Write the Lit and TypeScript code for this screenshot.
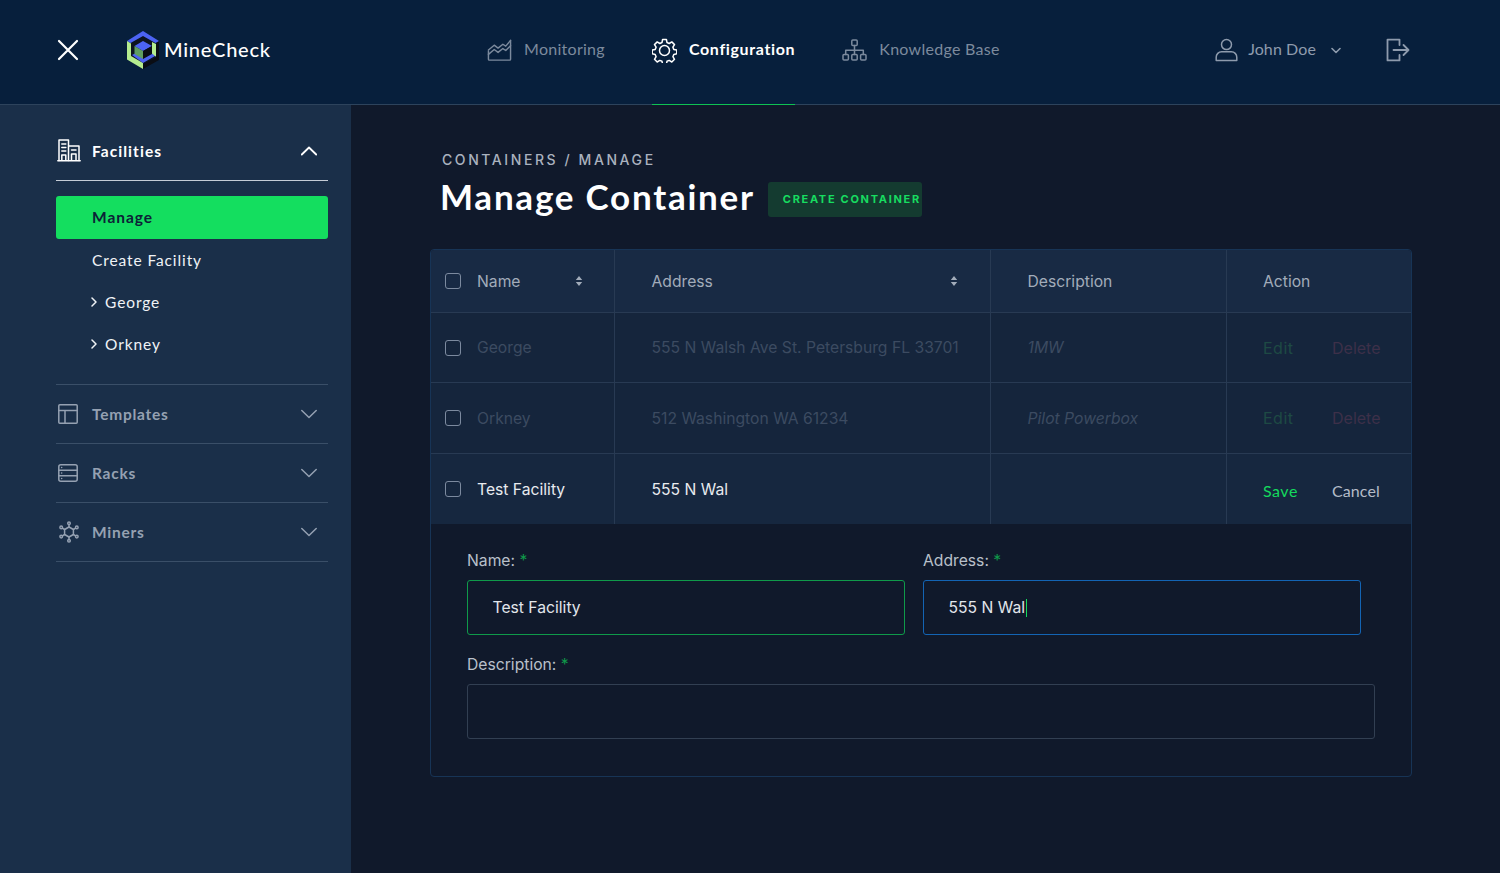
import { LitElement, html, css, svg } from 'lit';
import { customElement } from 'lit/decorators.js';

const icon = (w: number, h: number, vb: string, body: unknown) => html`<svg
  width=${w}
  height=${h}
  viewBox=${vb}
  fill="none"
  stroke="currentColor"
  stroke-width="1.5"
  stroke-linecap="round"
  stroke-linejoin="round"
>${body}</svg>`;

const chevronDown = icon(16, 10, '0 0 16 10', svg`<path d="M.8 1.5 8 8.5l7.2-7" />`);
const chevronUp = icon(16, 10, '0 0 16 10', svg`<path d="M.8 8.5 8 1.5l7.2 7" stroke-width="1.8" />`);
const chevronRight = icon(6, 10, '0 0 6 10', svg`<path d="M1 1l4 4-4 4" />`);
const chevronSmall = icon(10, 7, '0 0 10 7', svg`<path d="M1 1.5l4 4 4-4" stroke-width="1.6" />`);

const closeIcon = icon(22, 22, '0 0 22 22', svg`<path d="M2 2l18 18M20 2 2 20" stroke-width="2.2" />`);

const logo = html`<svg width="32" height="38" viewBox="0 0 32 38">
  <polygon points="4,12 16,5 28,12 28,26 16,33 4,26" fill="#0d1420" />
  <polygon points="29,9 32,10 32,29 16,38 16,33 29,26" fill="#0a0d14" />
  <polygon points="0,10 16,0 32,10 28.5,12 16,5 3.5,12" fill="#4c63f2" />
  <polygon points="0,10 4,12.5 4,25 16,32 16,38 0,28.5" fill="#b5ec8f" />
  <polygon points="25,11 29,13 29,25.5 25,24" fill="#b5ec8f" />
  <polygon points="5,24 9,22 16,26 25,22.5 28,25 16,32" fill="#4c63f2" />
  <polygon points="16,10 25,15 16,20 7.5,15" fill="#4c63f2" />
  <polygon points="7.5,15 16,20 16,28 7.5,23" fill="#5f9d62" />
  <polygon points="25,15 25,23 16,28 16,20" fill="#0a0d14" />
</svg>`;

const monitoringIcon = icon(25, 24, '0 0 26 24', svg`
  <path d="M1.5 13v8.5a1 1 0 0 0 1 1h21a1 1 0 0 0 1-1V2" />
  <path d="M1.5 12l6-5 4 3 5-4 3 2 5-6" />
  <path d="M1.5 16.5l6-5 4 3 5-4 3 2 5-5" />
`);
const gearIcon = icon(25, 25, '0 0 25 25', svg`
  <circle cx="12.5" cy="12.5" r="5" />
  <path d="M10.6 1.5h3.8l.6 3 2.2 1 2.6-1.6 2.7 2.7-1.6 2.6.9 2.2 3 .7v3.7l-3 .7-.9 2.2 1.6 2.6-2.7 2.7-2.6-1.6-2.2.9-.6 2.9h-3.8l-.6-2.9-2.2-.9-2.6 1.6-2.7-2.7 1.6-2.6-.9-2.2-3-.7v-3.7l3-.7.9-2.2-1.6-2.6 2.7-2.7 2.6 1.6 2.2-1z" />
`);
const treeIcon = icon(25, 22, '0 0 25 22', svg`
  <rect x="9.8" y="1" width="5.4" height="5.4" rx="1" />
  <rect x="1" y="15.6" width="5.4" height="5.4" rx="1" />
  <rect x="9.8" y="15.6" width="5.4" height="5.4" rx="1" />
  <rect x="18.6" y="15.6" width="5.4" height="5.4" rx="1" />
  <path d="M12.5 6.4v9.2M3.7 15.6v-4.4h17.6v4.4" />
`);
const userIcon = icon(23, 24, '0 0 23 24', svg`
  <circle cx="11.5" cy="6.6" r="5" />
  <path d="M1.2 22.6v-3.4c0-3 2.4-5.4 5.4-5.4h9.8c3 0 5.4 2.4 5.4 5.4v3.4z" />
`);
const logoutIcon = icon(24, 24, '0 0 24 24', svg`
  <path d="M13.5 7V1.6H1.5v20.8h12V17" stroke-width="1.8" />
  <path d="M7.5 12h15M17.5 7l5 5-5 5" stroke-width="1.8" />
`);

const buildingIcon = icon(24, 23, '0 0 24 23', svg`
  <path d="M.8 21.8h22.4" />
  <path d="M2 21.5V1h9.5v20.5M11.5 7H22v14.5" />
  <path d="M4.8 5h4M4.8 8.5h4M4.8 12h4M14.5 11h4.5" />
  <path d="M4.8 21v-5h4v5M14.5 21v-6h4.5v6" />
`);
const templateIcon = icon(20, 20, '0 0 20 20', svg`
  <rect x=".8" y=".8" width="18.4" height="18.4" rx="1" />
  <path d="M.8 6.5h18.4M7 6.5v12.7" />
`);
const rackIcon = icon(20, 18, '0 0 20 18', svg`
  <rect x=".8" y=".8" width="18.4" height="16.4" rx="2" />
  <path d="M.8 6.2h18.4M.8 11.8h18.4" />
  <path d="M3.6 3.5h.1M3.6 9h.1M3.6 14.5h.1" />
`);
const minerIcon = icon(22, 22, '0 0 22 22', svg`
  <path d="M11 6l4.4 2.5v5L11 16l-4.4-2.5v-5z" />
  <path d="M11 6V3.4M11 16v2.6M15.4 8.5l2.2-1.3M6.6 13.5l-2.2 1.3M15.4 13.5l2.2 1.3M6.6 8.5 4.4 7.2" />
  <circle cx="11" cy="2.2" r="1.3" />
  <circle cx="11" cy="19.8" r="1.3" />
  <circle cx="18.8" cy="6.4" r="1.3" />
  <circle cx="3.2" cy="15.6" r="1.3" />
  <circle cx="18.8" cy="15.6" r="1.3" />
  <circle cx="3.2" cy="6.4" r="1.3" />
`);

const sortIcon = html`<svg width="8" height="10" viewBox="0 0 8 10" fill="currentColor">
  <path d="M4 0l3.2 4H.8zM4 10 .8 6h6.4z" />
</svg>`;

@customElement('app-root')
export class AppRoot extends LitElement {
  static styles = css`
    :host {
      display: block;
      height: 873px;
      overflow: hidden;
      background: #10192b;
      font-family: 'Inter', 'Liberation Sans', sans-serif;
      color: #fff;
    }
    .topbar {
      height: 100px;
      display: flex;
      align-items: center;
      padding: 0 0 4px 57px;
      background: #071f3c;
      border-bottom: 1px solid #2d435c;
    }
    .nav-font {
      font-family: 'Lato', 'Liberation Sans', sans-serif;
    }
    .close {
      display: flex;
      color: #fff;
      margin-right: 48px;
    }
    .brand {
      display: flex;
      align-items: center;
      gap: 5px;
      width: 216px;
      font-size: 20px;
      font-weight: 500;
      letter-spacing: 0.75px;
    }
    .brand span {
      margin-bottom: 2px;
    }
    nav {
      display: flex;
      height: 100%;
      margin-left: 144px;
    }
    nav a {
      position: relative;
      display: flex;
      align-items: center;
      gap: 12px;
      margin-right: 47px;
      font-size: 16px;
      letter-spacing: 0.28px;
      color: #7c8a9d;
    }
    nav a span {
      margin-bottom: 3px;
    }
    nav a.active {
      color: #fff;
      font-weight: 700;
      letter-spacing: 0.65px;
    }
    nav a.active::after {
      content: '';
      position: absolute;
      left: 0;
      right: 0;
      bottom: -5px;
      height: 1px;
      background: #0ec253;
    }
    .account {
      display: flex;
      align-items: center;
      margin-left: auto;
      margin-right: 90px;
      color: #8e9bad;
      font-size: 16px;
      letter-spacing: 0.1px;
    }
    .account .name {
      margin: 0 15px 3px 10px;
    }
    .account .chev {
      display: flex;
      margin-right: 45px;
    }
    .body {
      display: flex;
      height: 768px;
    }
    aside {
      width: 351px;
      flex: none;
      box-sizing: border-box;
      padding: 0 23.5px 0 56px;
      background: #1a2f49;
    }
    .section-head {
      display: flex;
      align-items: center;
      height: 59px;
      padding-right: 11px;
      border-bottom: 1px solid #3a4f68;
      box-sizing: border-box;
      color: #95a1b2;
      font-size: 15.5px;
      font-weight: 700;
      letter-spacing: 0.75px;
    }
    .section-head .ico {
      width: 36px;
      display: flex;
      padding-left: 2px;
      box-sizing: border-box;
    }
    .section-head .chev {
      margin-left: auto;
      display: flex;
    }
    .section-head.open {
      height: 76px;
      padding-top: 16px;
      color: #fff;
      border-bottom-color: #c5ccd6;
      letter-spacing: 1.05px;
    }
    .section-head.open .ico {
      padding-left: 1px;
    }
    .menu {
      padding: 15px 0 18px;
      border-bottom: 1px solid #3a4f68;
      font-size: 15.5px;
      letter-spacing: 0.9px;
    }
    .menu div {
      display: flex;
      align-items: center;
      height: 42.4px;
      box-sizing: border-box;
      padding: 0 0 1px 36px;
      color: #f0f3f6;
    }
    .menu .current {
      height: 43px;
      background: #14de5f;
      border-radius: 3px;
      color: #0c2237;
      font-weight: 700;
      letter-spacing: 0.95px;
    }
    .menu .sub {
      padding-left: 35px;
      gap: 8px;
    }
    main {
      flex: 1;
      padding: 43px 88px 0 79px;
    }
    .crumbs {
      margin-left: 12px;
      font-size: 14px;
      line-height: 24px;
      font-weight: 500;
      letter-spacing: 2.58px;
      color: #aab2bf;
    }
    .title-row {
      display: flex;
      align-items: center;
      margin: 3px 0 0 10px;
      gap: 13px;
      height: 41px;
    }
    h1 {
      margin: 0;
      font-family: 'Lato', 'Liberation Sans', sans-serif;
      font-size: 35px;
      font-weight: 700;
      letter-spacing: 1.75px;
      white-space: nowrap;
    }
    .badge {
      display: flex;
      align-items: center;
      width: 154px;
      height: 35px;
      box-sizing: border-box;
      padding-left: 15px;
      margin-top: 7px;
      background: #143b30;
      border-radius: 3px;
      color: #17dc60;
      font-size: 11px;
      font-weight: 700;
      letter-spacing: 1.7px;
      white-space: nowrap;
    }
    .table {
      margin-top: 33px;
      border: 1px solid #173456;
      border-radius: 4px;
      overflow: hidden;
    }
    .row {
      display: grid;
      grid-template-columns: 184px 376px 236px 1fr;
      height: 69px;
      background: #15253c;
      border-bottom: 1px solid #283a53;
      font-size: 15.7px;
      color: #3c4b61;
    }
    .row.tall {
      height: 70px;
    }
    .row.head {
      height: 62px;
      background: #182a44;
      color: #a2acba;
    }
    .row.live {
      height: 70px;
      background: #16273f;
      border-bottom: none;
      color: #e8ebef;
    }
    .cell {
      display: flex;
      align-items: center;
      padding-left: 36.5px;
      border-right: 1px solid #283a53;
    }
    .cell:last-child {
      border-right: none;
      padding-left: 36px;
    }
    .cell.name {
      padding-left: 14px;
      gap: 16px;
    }
    .cell.sortable {
      padding-right: 32px;
    }
    .cell.name.sortable {
      padding-right: 31px;
    }
    .cell .sort {
      display: flex;
      margin-left: auto;
      color: #a2acba;
    }
    .check {
      width: 16px;
      height: 16px;
      flex: none;
      box-sizing: border-box;
      border: 1.5px solid #7c8a9f;
      border-radius: 3px;
    }
    .desc {
      font-style: italic;
    }
    .edit {
      color: #1e4a44;
      width: 69px;
      font-size: 16px;
      letter-spacing: 0.5px;
    }
    .del {
      color: #3d3049;
      font-size: 16px;
    }
    .save {
      width: 69px;
      padding-top: 3px;
      color: #14d95d;
      font-family: 'Lato', 'Liberation Sans', sans-serif;
      font-size: 16px;
      letter-spacing: 0.5px;
    }
    .cancel {
      padding-top: 3px;
      color: #b4bcc8;
      font-family: 'Lato', 'Liberation Sans', sans-serif;
      font-size: 16px;
      letter-spacing: 0.1px;
    }
    .form {
      padding: 26px 36px 37px;
      font-size: 15.7px;
      color: #b9c0ca;
    }
    .fields {
      display: grid;
      grid-template-columns: 438px 438px;
      column-gap: 18px;
    }
    label {
      display: block;
      line-height: 22px;
      margin-bottom: 8px;
    }
    label b {
      font-weight: 400;
      color: #0f9a4a;
    }
    .input {
      display: flex;
      align-items: center;
      height: 55px;
      box-sizing: border-box;
      padding-left: 24.5px;
      border: 1px solid #323f52;
      border-radius: 3px;
      color: #e2e6eb;
    }
    .input.ok {
      border-color: #0f9a4a;
    }
    .input.focus {
      border-color: #1364b4;
    }
    .caret {
      width: 1px;
      height: 18px;
      margin-left: 1px;
      background: #14d95d;
    }
    .desc-field {
      margin-top: 19px;
    }
  `;

  render() {
    return html`
      <header class="topbar nav-font">
        <span class="close">${closeIcon}</span>
        <div class="brand">${logo}<span>MineCheck</span></div>
        <nav>
          <a>${monitoringIcon}<span>Monitoring</span></a>
          <a class="active">${gearIcon}<span>Configuration</span></a>
          <a>${treeIcon}<span>Knowledge Base</span></a>
        </nav>
        <div class="account">
          ${userIcon}
          <span class="name">John Doe</span>
          <span class="chev">${chevronSmall}</span>
          ${logoutIcon}
        </div>
      </header>
      <div class="body">
        <aside class="nav-font">
          <div class="section-head open">
            <span class="ico">${buildingIcon}</span>Facilities
            <span class="chev">${chevronUp}</span>
          </div>
          <div class="menu">
            <div class="current">Manage</div>
            <div>Create Facility</div>
            <div class="sub">${chevronRight}George</div>
            <div class="sub">${chevronRight}Orkney</div>
          </div>
          <div class="section-head">
            <span class="ico">${templateIcon}</span>Templates
            <span class="chev">${chevronDown}</span>
          </div>
          <div class="section-head">
            <span class="ico">${rackIcon}</span>Racks
            <span class="chev">${chevronDown}</span>
          </div>
          <div class="section-head">
            <span class="ico">${minerIcon}</span>Miners
            <span class="chev">${chevronDown}</span>
          </div>
        </aside>
        <main>
          <div class="crumbs">CONTAINERS / MANAGE</div>
          <div class="title-row">
            <h1>Manage Container</h1>
            <span class="badge">CREATE CONTAINER</span>
          </div>
          <div class="table">
            <div class="row head">
              <div class="cell name sortable">
                <span class="check"></span>Name<span class="sort">${sortIcon}</span>
              </div>
              <div class="cell sortable">Address<span class="sort">${sortIcon}</span></div>
              <div class="cell">Description</div>
              <div class="cell">Action</div>
            </div>
            <div class="row">
              <div class="cell name"><span class="check"></span>George</div>
              <div class="cell">555 N Walsh Ave St. Petersburg FL 33701</div>
              <div class="cell desc">1MW</div>
              <div class="cell"><span class="edit">Edit</span><span class="del">Delete</span></div>
            </div>
            <div class="row tall">
              <div class="cell name"><span class="check"></span>Orkney</div>
              <div class="cell">512 Washington WA 61234</div>
              <div class="cell desc">Pilot Powerbox</div>
              <div class="cell"><span class="edit">Edit</span><span class="del">Delete</span></div>
            </div>
            <div class="row live">
              <div class="cell name"><span class="check"></span>Test Facility</div>
              <div class="cell">555 N Wal</div>
              <div class="cell"></div>
              <div class="cell"><span class="save">Save</span><span class="cancel">Cancel</span></div>
            </div>
            <div class="form">
              <div class="fields">
                <div>
                  <label>Name: <b>*</b></label>
                  <div class="input ok">Test Facility</div>
                </div>
                <div>
                  <label>Address: <b>*</b></label>
                  <div class="input focus">555 N Wal<span class="caret"></span></div>
                </div>
              </div>
              <div class="desc-field">
                <label>Description: <b>*</b></label>
                <div class="input"></div>
              </div>
            </div>
          </div>
        </main>
      </div>
    `;
  }
}
